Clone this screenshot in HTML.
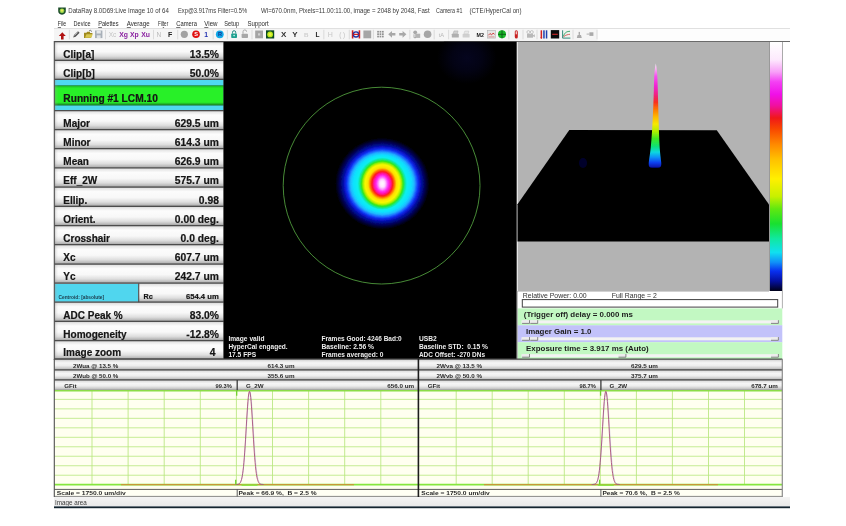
<!DOCTYPE html>
<html><head><meta charset="utf-8"><title>DataRay</title>
<style>
html,body{margin:0;padding:0;background:#fff;}
body{width:846px;height:526px;position:relative;overflow:hidden;font-family:"Liberation Sans",sans-serif;color:#111;}
.abs{position:absolute;}
.t{position:absolute;white-space:nowrap;line-height:1;}
.row{position:absolute;left:54px;width:168px;box-sizing:border-box;border-top:1px solid #555;border-left:1px solid #555;
 background:linear-gradient(to right,rgba(120,120,120,0.45) 0px,rgba(160,160,160,0.18) 1.5px,rgba(200,200,200,0) 3.5px),linear-gradient(to bottom,#cfcfcf 0%,#ececec 8%,#fdfdfd 24%,#f8f8f8 55%,#dcdcdc 80%,#b4b4b4 95%,#8c8c8c 100%);}
.row .l{position:absolute;left:8.3px;bottom:0px;font-weight:bold;font-size:10px;line-height:1;white-space:nowrap;filter:blur(0.3px);}
.row .v{position:absolute;right:3px;bottom:0px;font-weight:bold;font-size:10.3px;line-height:1;white-space:nowrap;filter:blur(0.3px);}
.srow{position:absolute;box-sizing:border-box;border-top:1px solid #555;border-left:1px solid #555;height:10.3px;
 background:linear-gradient(to bottom,#dcdcdc 0%,#f6f6f6 35%,#f0f0f0 60%,#c4c4c4 100%);}
.st{position:absolute;font-weight:bold;font-size:6.3px;line-height:1;white-space:nowrap;color:#222;filter:blur(0.25px);}
.it{position:absolute;font-weight:bold;font-size:6.4px;line-height:1;white-space:nowrap;color:#e8e8e8;filter:blur(0.25px);}
</style></head><body style="filter:blur(0.4px)">

<svg class="abs" style="left:0;top:0;filter:blur(0.25px)" width="846" height="29" viewBox="0 0 846 29" font-family="Liberation Sans, sans-serif" font-size="6.4" fill="#3a3a3a">
<path d="M58.2 7.6 H65.8 V11 Q65.8 14.2 62 14.8 Q58.2 14.2 58.2 11Z" fill="#1d4d2a"/><circle cx="62" cy="10.8" r="2.4" fill="#8fd14a"/><circle cx="62" cy="10.5" r="1.2" fill="#e9e95a"/>
<text x="68.3" y="13.3" textLength="100.5" lengthAdjust="spacingAndGlyphs">DataRay 8.0D69:Live Image 10 of 64</text>
<text x="178" y="13.3" textLength="69.1" lengthAdjust="spacingAndGlyphs">Exp@3.917ms Filter=0.5%</text>
<text x="261" y="13.3" textLength="168.6" lengthAdjust="spacingAndGlyphs">Wl=670.0nm, Pixels=11.00:11.00, image = 2048 by 2048, Fast</text>
<text x="436.1" y="13.3" textLength="26.4" lengthAdjust="spacingAndGlyphs">Camera #1</text>
<text x="469.4" y="13.3" textLength="52.1" lengthAdjust="spacingAndGlyphs">(CTE/HyperCal on)</text>
<text x="57.8" y="26.2" textLength="8.5" lengthAdjust="spacingAndGlyphs" fill="#2a2a2a"><tspan text-decoration="underline">F</tspan>ile</text>
<text x="73.6" y="26.2" textLength="16.9" lengthAdjust="spacingAndGlyphs" fill="#2a2a2a">Device</text>
<text x="98.2" y="26.2" textLength="20.4" lengthAdjust="spacingAndGlyphs" fill="#2a2a2a"><tspan text-decoration="underline">P</tspan>alettes</text>
<text x="126.8" y="26.2" textLength="22.8" lengthAdjust="spacingAndGlyphs" fill="#2a2a2a"><tspan text-decoration="underline">A</tspan>verage</text>
<text x="157.9" y="26.2" textLength="10.3" lengthAdjust="spacingAndGlyphs" fill="#2a2a2a">Fil<tspan text-decoration="underline">t</tspan>er</text>
<text x="176.2" y="26.2" textLength="20.7" lengthAdjust="spacingAndGlyphs" fill="#2a2a2a"><tspan text-decoration="underline">C</tspan>amera</text>
<text x="204.3" y="26.2" textLength="13.3" lengthAdjust="spacingAndGlyphs" fill="#2a2a2a"><tspan text-decoration="underline">V</tspan>iew</text>
<text x="224.3" y="26.2" textLength="14.8" lengthAdjust="spacingAndGlyphs" fill="#2a2a2a">Setup</text>
<text x="247.4" y="26.2" textLength="21.3" lengthAdjust="spacingAndGlyphs" fill="#2a2a2a">Support</text>
</svg>
<div class="abs" style="left:54px;top:28px;width:736px;height:13px;background:linear-gradient(to right,#f5f5f5 0,#f5f5f5 543px,#fdfdfd 544px,#fdfdfd 100%);border-top:1px solid #e0e0e0;box-sizing:border-box;"></div>
<div class="abs" style="left:54px;top:40.6px;width:736px;height:1.4px;background:#6a6a6a;"></div>
<svg class="abs" style="left:54px;top:29px;filter:blur(0.3px)" width="560" height="12" viewBox="54 29.7 560 12" font-family="Liberation Sans, sans-serif" font-weight="bold" text-anchor="middle">
<line x1="69.4" x2="69.4" y1="30.5" y2="40" stroke="#d4d4d4" stroke-width="0.8"/>
<line x1="105.5" x2="105.5" y1="30.5" y2="40" stroke="#d4d4d4" stroke-width="0.8"/>
<line x1="153.5" x2="153.5" y1="30.5" y2="40" stroke="#d4d4d4" stroke-width="0.8"/>
<line x1="177.7" x2="177.7" y1="30.5" y2="40" stroke="#d4d4d4" stroke-width="0.8"/>
<line x1="213.2" x2="213.2" y1="30.5" y2="40" stroke="#d4d4d4" stroke-width="0.8"/>
<line x1="227.4" x2="227.4" y1="30.5" y2="40" stroke="#d4d4d4" stroke-width="0.8"/>
<line x1="252" x2="252" y1="30.5" y2="40" stroke="#d4d4d4" stroke-width="0.8"/>
<line x1="323.8" x2="323.8" y1="30.5" y2="40" stroke="#d4d4d4" stroke-width="0.8"/>
<line x1="349.3" x2="349.3" y1="30.5" y2="40" stroke="#d4d4d4" stroke-width="0.8"/>
<line x1="373.4" x2="373.4" y1="30.5" y2="40" stroke="#d4d4d4" stroke-width="0.8"/>
<line x1="409.8" x2="409.8" y1="30.5" y2="40" stroke="#d4d4d4" stroke-width="0.8"/>
<line x1="434.2" x2="434.2" y1="30.5" y2="40" stroke="#d4d4d4" stroke-width="0.8"/>
<line x1="448.6" x2="448.6" y1="30.5" y2="40" stroke="#d4d4d4" stroke-width="0.8"/>
<line x1="508.8" x2="508.8" y1="30.5" y2="40" stroke="#d4d4d4" stroke-width="0.8"/>
<line x1="523" x2="523" y1="30.5" y2="40" stroke="#d4d4d4" stroke-width="0.8"/>
<line x1="537" x2="537" y1="30.5" y2="40" stroke="#d4d4d4" stroke-width="0.8"/>
<line x1="573" x2="573" y1="30.5" y2="40" stroke="#d4d4d4" stroke-width="0.8"/>
<line x1="597" x2="597" y1="30.5" y2="40" stroke="#d4d4d4" stroke-width="0.8"/>
<path d="M62.3 32.9 L65.8 36.6 H63.6 V40.1 H61 V36.6 H58.8Z" fill="#b01010"/>
<path d="M73.2 38.2 L74 35.6 L78 32 L79.6 33.4 L75.6 37.4Z" fill="#555"/><path d="M74.4 36.2 L77.6 33.2" stroke="#ddd" stroke-width="0.7"/>
<path d="M84 38.6 V33.4 H86.4 L87.2 32.4 H90 V33.6 H92.6 L91 38.6Z" fill="#a08a20"/><path d="M85 38.4 L86.4 35 H92.8 L91.2 38.4Z" fill="#d8c850"/><path d="M89 31.6 l1.6 -0.8 l1 1.6" stroke="#555" stroke-width="0.7" fill="none"/>
<rect x="95" y="31.2" width="7.4" height="7.6" fill="#a8b0b8"/><rect x="96.6" y="31.2" width="4.2" height="3" fill="#e6e8ea"/><rect x="96.8" y="36" width="3.8" height="2.8" fill="#dfe2e5"/>
<text x="112.5" y="37.6" font-size="6.6" fill="#c4c4c4" font-weight="normal">Xc</text>
<text x="123.5" y="37.6" font-size="6.8" fill="#8a20a0">Xg</text>
<text x="134.4" y="37.6" font-size="6.8" fill="#8a20a0">Xp</text>
<text x="145.6" y="37.6" font-size="6.8" fill="#8a20a0">Xu</text>
<text x="158.8" y="37.6" font-size="6.6" fill="#b8b8b8" font-weight="normal">N</text>
<text x="170.2" y="37.8" font-size="7" fill="#222">F</text>
<circle cx="184.3" cy="35" r="3.6" fill="#a2a2a2"/>
<circle cx="196" cy="35" r="3.8" fill="#e01010"/><text x="196" y="37.1" font-size="5.6" fill="#fff">S</text>
<text x="206.2" y="37.6" font-size="6.8" fill="#2030b0">1</text>
<circle cx="219.8" cy="35" r="3.9" fill="#10a8e8"/><text x="219.9" y="37.1" font-size="5.6" fill="#103090">R</text>
<path d="M232.5 34.2 V33 a1.6 1.6 0 0 1 3.2 0 V34.2" fill="none" stroke="#208880" stroke-width="1"/><rect x="231.2" y="34.2" width="5.8" height="4.6" rx="0.8" fill="#20a090"/><circle cx="234.1" cy="36.3" r="0.8" fill="#d8fff0"/>
<path d="M243 34.4 V32.4 a1.8 1.8 0 0 1 3.6 0" fill="none" stroke="#aaa" stroke-width="1"/><rect x="241.6" y="34.4" width="6.4" height="4.4" rx="0.8" fill="#a8a8a8"/>
<rect x="255.2" y="31.2" width="7.8" height="7.8" fill="#a4a4a4"/><rect x="258" y="34" width="2.2" height="2.2" fill="#d0d0d0"/>
<rect x="266" y="31" width="8.2" height="8.2" fill="#0c4a20"/><circle cx="270.1" cy="35.1" r="2.9" fill="#b8e818"/><circle cx="270.1" cy="35.1" r="1.6" fill="#e8f040"/>
<text x="283.7" y="38" font-size="8" fill="#333">X</text>
<text x="295" y="38" font-size="8" fill="#333">Y</text>
<text x="306.2" y="37.5" font-size="6.2" fill="#cfcfcf">B</text>
<text x="317.4" y="37.6" font-size="6.6" fill="#222">L</text>
<text x="330.4" y="37.8" font-size="7" fill="#c8c8c8" font-weight="normal">H</text>
<text x="342.2" y="37.4" font-size="6.4" fill="#c4c4c4" font-weight="normal">( )</text>
<rect x="351.8" y="31" width="8.4" height="8.2" fill="#f0f0f8"/><rect x="351.8" y="31" width="1.6" height="8.2" fill="#d02020"/><rect x="358.6" y="31" width="1.6" height="8.2" fill="#d02020"/><circle cx="356" cy="35.1" r="2.6" fill="none" stroke="#2030a0" stroke-width="1.3"/><rect x="353.4" y="34.5" width="5.2" height="1.2" fill="#d02020"/>
<rect x="363.4" y="31.2" width="7.8" height="7.8" fill="#a6a6a6"/>
<rect x="377.2" y="31.6" width="1.7" height="1.7" fill="#909090"/>
<rect x="377.2" y="34.0" width="1.7" height="1.7" fill="#909090"/>
<rect x="377.2" y="36.4" width="1.7" height="1.7" fill="#909090"/>
<rect x="379.6" y="31.6" width="1.7" height="1.7" fill="#909090"/>
<rect x="379.6" y="34.0" width="1.7" height="1.7" fill="#909090"/>
<rect x="379.6" y="36.4" width="1.7" height="1.7" fill="#909090"/>
<rect x="382.0" y="31.6" width="1.7" height="1.7" fill="#909090"/>
<rect x="382.0" y="34.0" width="1.7" height="1.7" fill="#909090"/>
<rect x="382.0" y="36.4" width="1.7" height="1.7" fill="#909090"/>
<path d="M388.2 35 L392 31.6 V33.8 H395.4 V36.2 H392 V38.4Z" fill="#a8a8a8"/>
<path d="M406.4 35 L402.6 31.6 V33.8 H399.2 V36.2 H402.6 V38.4Z" fill="#a8a8a8"/>
<circle cx="415.2" cy="33" r="1.9" fill="#a8a8a8"/><rect x="415.2" y="34.4" width="5" height="4.2" fill="#b4b4b4"/><path d="M414 35 v3.4 h2" stroke="#999" stroke-width="0.8" fill="none"/>
<circle cx="427.6" cy="35" r="3.8" fill="#a6a6a6"/>
<text x="441.4" y="37.4" font-size="5.8" fill="#b8b8b8" font-weight="normal">tA</text>
<rect x="451.8" y="34.4" width="7" height="3.8" rx="0.6" fill="#b0b0b0"/><path d="M453 34.4 L454 31.6 H458 L457.4 34.4Z" fill="#d0d0d0" stroke="#aaa" stroke-width="0.5"/>
<rect x="462.6" y="34.6" width="7" height="3.6" rx="0.6" fill="#d0d0d0"/><path d="M463.8 34.6 L464.8 31.8 H468.8 L468.2 34.6Z" fill="#e8e8e8" stroke="#c4c4c4" stroke-width="0.5"/>
<text x="480.2" y="37.4" font-size="6.2" fill="#111" textLength="7.4" lengthAdjust="spacingAndGlyphs">M2</text>
<rect x="487.6" y="31.2" width="7.8" height="7.6" fill="#e6e6e6" stroke="#b0b0b0" stroke-width="0.6"/><path d="M488.4 36 L490 34.2 L491.6 35.6 L493 33.8 L494.6 35" stroke="#d03030" stroke-width="0.9" fill="none"/><path d="M488.4 37.6 H494.6" stroke="#d06060" stroke-width="0.6"/>
<circle cx="502" cy="35" r="4" fill="#18b828"/><path d="M498 35 H506 M502 31 V39" stroke="#0a5a14" stroke-width="0.9"/>
<rect x="514.8" y="31" width="3" height="8.2" rx="1.5" fill="#c82020"/><rect x="515.6" y="32" width="1.4" height="3" fill="#f0c0c0"/>
<rect x="527" y="34.6" width="6" height="3.8" fill="#b8b8b8"/><circle cx="528.4" cy="32.8" r="1.5" fill="none" stroke="#b8b8b8" stroke-width="0.8"/><circle cx="531.8" cy="32.8" r="1.5" fill="none" stroke="#b8b8b8" stroke-width="0.8"/><path d="M533 36 l1.8 -1 v3 l-1.8 -1z" fill="#b8b8b8"/>
<rect x="540.6" y="31" width="1.5" height="8.2" fill="#d02020"/><rect x="543.2" y="31" width="1.5" height="8.2" fill="#2040b0"/><rect x="545.8" y="31" width="1.5" height="8.2" fill="#2040b0"/><path d="M541.3 39.6 l-1 -1.6 h2z" fill="#d02020"/>
<rect x="550.8" y="30.8" width="8.4" height="8.4" fill="#0a0a0a"/><rect x="552.2" y="34.4" width="5.6" height="1.3" fill="#b02020"/>
<rect x="562.4" y="31" width="8" height="8" fill="#eef4ee"/><path d="M562.6 31 V38.8 H570.4" stroke="#208070" stroke-width="0.9" fill="none"/><path d="M563.4 37 C565 32.6 567 32.2 570 32" stroke="#30a060" stroke-width="0.9" fill="none"/><path d="M563.4 37.6 C566 35.4 568 35.2 570 35" stroke="#d04040" stroke-width="0.8" fill="none"/>
<rect x="578.6" y="32.6" width="1.4" height="3" fill="#aaa"/><path d="M576.8 38.6 L577.6 35.6 H581 L581.8 38.6Z" fill="#aaa"/>
<rect x="589.4" y="33" width="4" height="3.6" fill="#aaa"/><path d="M586.6 34.8 H589.4" stroke="#aaa" stroke-width="0.9"/>
</svg>
<svg class="abs" style="left:50px;top:38px" width="176" height="326" viewBox="50 38 176 326" font-family="Liberation Sans, sans-serif" font-weight="bold">
<defs>
<linearGradient id="rg" x1="0" y1="0" x2="0" y2="1">
<stop offset="0" stop-color="#c8c8c8"/><stop offset="0.08" stop-color="#e6e6e6"/><stop offset="0.24" stop-color="#fcfcfc"/><stop offset="0.55" stop-color="#f8f8f8"/><stop offset="0.78" stop-color="#dedede"/><stop offset="0.93" stop-color="#b8b8b8"/><stop offset="1" stop-color="#909090"/>
</linearGradient>
<linearGradient id="lg" x1="0" y1="0" x2="1" y2="0">
<stop offset="0" stop-color="#707070" stop-opacity="0.55"/><stop offset="0.4" stop-color="#a0a0a0" stop-opacity="0.2"/><stop offset="1" stop-color="#c0c0c0" stop-opacity="0"/>
</linearGradient>
<linearGradient id="gg" x1="0" y1="0" x2="0" y2="1">
<stop offset="0" stop-color="#1a7a2a"/><stop offset="0.07" stop-color="#22d02a"/><stop offset="0.16" stop-color="#28f028"/><stop offset="0.84" stop-color="#28f028"/><stop offset="0.91" stop-color="#20b828"/><stop offset="1" stop-color="#186a22"/>
</linearGradient>
<filter id="tb"><feGaussianBlur stdDeviation="0.3"/></filter>
</defs>
<rect x="54.3" y="79.3" width="169.3" height="31.2" fill="#4fd9f0"/>
<rect x="54.3" y="85.3" width="169.3" height="20.2" fill="url(#gg)"/>
<rect x="54.3" y="41.5" width="169.3" height="18.8" fill="url(#rg)"/>
<rect x="54.3" y="60.3" width="169.3" height="19.0" fill="url(#rg)"/>
<rect x="54.3" y="110.5" width="169.3" height="19.1" fill="url(#rg)"/>
<rect x="54.3" y="129.6" width="169.3" height="19.1" fill="url(#rg)"/>
<rect x="54.3" y="148.7" width="169.3" height="19.1" fill="url(#rg)"/>
<rect x="54.3" y="167.8" width="169.3" height="19.2" fill="url(#rg)"/>
<rect x="54.3" y="187.0" width="169.3" height="19.3" fill="url(#rg)"/>
<rect x="54.3" y="206.3" width="169.3" height="19.2" fill="url(#rg)"/>
<rect x="54.3" y="225.5" width="169.3" height="19.2" fill="url(#rg)"/>
<rect x="54.3" y="244.7" width="169.3" height="19.3" fill="url(#rg)"/>
<rect x="54.3" y="264.0" width="169.3" height="19.2" fill="url(#rg)"/>
<rect x="54.3" y="283.2" width="169.3" height="19.0" fill="url(#rg)"/>
<rect x="54.3" y="302.2" width="169.3" height="19.2" fill="url(#rg)"/>
<rect x="54.3" y="321.4" width="169.3" height="19.2" fill="url(#rg)"/>
<rect x="54.3" y="340.6" width="169.3" height="18.6" fill="url(#rg)"/>
<rect x="54.3" y="283.9" width="84" height="17.8" fill="#50d6ee"/>
<line x1="138.7" x2="138.7" y1="283.2" y2="302.2" stroke="#505050" stroke-width="1.2"/>
<rect x="54.3" y="41.5" width="4" height="317.7" fill="url(#lg)"/>
<line x1="54.3" x2="223.6" y1="41.5" y2="41.5" stroke="#4c4c4c" stroke-width="1.25"/>
<line x1="54.3" x2="223.6" y1="60.3" y2="60.3" stroke="#4c4c4c" stroke-width="1.25"/>
<line x1="54.3" x2="223.6" y1="110.5" y2="110.5" stroke="#4c4c4c" stroke-width="1.25"/>
<line x1="54.3" x2="223.6" y1="129.6" y2="129.6" stroke="#4c4c4c" stroke-width="1.25"/>
<line x1="54.3" x2="223.6" y1="148.7" y2="148.7" stroke="#4c4c4c" stroke-width="1.25"/>
<line x1="54.3" x2="223.6" y1="167.8" y2="167.8" stroke="#4c4c4c" stroke-width="1.25"/>
<line x1="54.3" x2="223.6" y1="187.0" y2="187.0" stroke="#4c4c4c" stroke-width="1.25"/>
<line x1="54.3" x2="223.6" y1="206.3" y2="206.3" stroke="#4c4c4c" stroke-width="1.25"/>
<line x1="54.3" x2="223.6" y1="225.5" y2="225.5" stroke="#4c4c4c" stroke-width="1.25"/>
<line x1="54.3" x2="223.6" y1="244.7" y2="244.7" stroke="#4c4c4c" stroke-width="1.25"/>
<line x1="54.3" x2="223.6" y1="264.0" y2="264.0" stroke="#4c4c4c" stroke-width="1.25"/>
<line x1="54.3" x2="223.6" y1="283.2" y2="283.2" stroke="#4c4c4c" stroke-width="1.25"/>
<line x1="54.3" x2="223.6" y1="302.2" y2="302.2" stroke="#4c4c4c" stroke-width="1.25"/>
<line x1="54.3" x2="223.6" y1="321.4" y2="321.4" stroke="#4c4c4c" stroke-width="1.25"/>
<line x1="54.3" x2="223.6" y1="340.6" y2="340.6" stroke="#4c4c4c" stroke-width="1.25"/>
<line x1="54.3" x2="223.6" y1="79.3" y2="79.3" stroke="#4c4c4c" stroke-width="1.25"/>
<line x1="54.3" x2="223.6" y1="359.2" y2="359.2" stroke="#4c4c4c" stroke-width="1.25"/>
<line x1="54.3" x2="54.3" y1="41" y2="360" stroke="#505050" stroke-width="1.1"/>
<g filter="url(#tb)" fill="#141414" stroke="#141414" stroke-width="0.2">
<text x="63.3" y="57.5" font-size="10">Clip[a]</text>
<text x="218.9" y="57.5" font-size="10.3" text-anchor="end">13.5%</text>
<text x="63.3" y="76.5" font-size="10">Clip[b]</text>
<text x="218.9" y="76.5" font-size="10.3" text-anchor="end">50.0%</text>
<text x="63.3" y="126.8" font-size="10">Major</text>
<text x="218.9" y="126.8" font-size="10.3" text-anchor="end">629.5 um</text>
<text x="63.3" y="145.9" font-size="10">Minor</text>
<text x="218.9" y="145.9" font-size="10.3" text-anchor="end">614.3 um</text>
<text x="63.3" y="165.0" font-size="10">Mean</text>
<text x="218.9" y="165.0" font-size="10.3" text-anchor="end">626.9 um</text>
<text x="63.3" y="184.2" font-size="10">Eff_2W</text>
<text x="218.9" y="184.2" font-size="10.3" text-anchor="end">575.7 um</text>
<text x="63.3" y="203.5" font-size="10">Ellip.</text>
<text x="218.9" y="203.5" font-size="10.3" text-anchor="end">0.98</text>
<text x="63.3" y="222.7" font-size="10">Orient.</text>
<text x="218.9" y="222.7" font-size="10.3" text-anchor="end">0.00 deg.</text>
<text x="63.3" y="241.9" font-size="10">Crosshair</text>
<text x="218.9" y="241.9" font-size="10.3" text-anchor="end">0.0 deg.</text>
<text x="63.3" y="261.2" font-size="10">Xc</text>
<text x="218.9" y="261.2" font-size="10.3" text-anchor="end">607.7 um</text>
<text x="63.3" y="280.4" font-size="10">Yc</text>
<text x="218.9" y="280.4" font-size="10.3" text-anchor="end">242.7 um</text>
<text x="63.3" y="318.6" font-size="10">ADC Peak %</text>
<text x="218.9" y="318.6" font-size="10.3" text-anchor="end">83.0%</text>
<text x="63.3" y="337.8" font-size="10">Homogeneity</text>
<text x="218.9" y="337.8" font-size="10.3" text-anchor="end">-12.8%</text>
<text x="63.3" y="356.4" font-size="10">Image zoom</text>
<text x="215.6" y="356.4" font-size="10.3" text-anchor="end">4</text>
<text x="63.3" y="101.5" font-size="10.2">Running #1 LCM.10</text>
<text x="58.5" y="299.4" font-size="4.8" fill="#1c3c4c" stroke="none">Centroid: [absolute]</text>
<text x="143.5" y="298.9" font-size="7.2">Rc</text>
<text x="218.8" y="298.9" font-size="7.7" text-anchor="end">654.4 um</text>
</g>
</svg>
<div class="abs" style="left:224px;top:42px;width:292px;height:317px;background:#000;"></div>
<svg class="abs" style="left:222px;top:41px" width="295" height="319" viewBox="222 41 295 319">
<defs><filter id="b1" x="-20%" y="-20%" width="140%" height="140%"><feGaussianBlur stdDeviation="0.7"/></filter></defs>
<rect x="223.4" y="41.7" width="293.3" height="317.6" fill="#000"/>
<radialGradient id="gl" cx="0.5" cy="0.5" r="0.5"><stop offset="0" stop-color="#05051e"/><stop offset="0.5" stop-color="#030314"/><stop offset="1" stop-color="#000"/></radialGradient><clipPath id="cpc"><rect x="223.4" y="41.7" width="293.3" height="317.6"/></clipPath><ellipse cx="467" cy="58" rx="30" ry="26" fill="url(#gl)" clip-path="url(#cpc)"/>
<g filter="url(#b1)">
<ellipse cx="382.3" cy="183.7" rx="47.50" ry="46.07" fill="#000000"/>
<ellipse cx="382.3" cy="183.7" rx="46.75" ry="45.35" fill="#00010f"/>
<ellipse cx="382.3" cy="183.7" rx="46.00" ry="44.62" fill="#01021d"/>
<ellipse cx="382.3" cy="183.7" rx="45.25" ry="43.89" fill="#01032c"/>
<ellipse cx="382.3" cy="183.7" rx="44.50" ry="43.16" fill="#02043a"/>
<ellipse cx="382.3" cy="183.7" rx="43.75" ry="42.44" fill="#020549"/>
<ellipse cx="382.3" cy="183.7" rx="43.00" ry="41.71" fill="#030659"/>
<ellipse cx="382.3" cy="183.7" rx="42.25" ry="40.98" fill="#030768"/>
<ellipse cx="382.3" cy="183.7" rx="41.50" ry="40.25" fill="#040878"/>
<ellipse cx="382.3" cy="183.7" rx="40.75" ry="39.53" fill="#050a8a"/>
<ellipse cx="382.3" cy="183.7" rx="40.00" ry="38.80" fill="#060c9c"/>
<ellipse cx="382.3" cy="183.7" rx="39.25" ry="38.07" fill="#070fad"/>
<ellipse cx="382.3" cy="183.7" rx="38.50" ry="37.34" fill="#0914bf"/>
<ellipse cx="382.3" cy="183.7" rx="37.75" ry="36.62" fill="#0b1dd0"/>
<ellipse cx="382.3" cy="183.7" rx="37.00" ry="35.89" fill="#0e27e0"/>
<ellipse cx="382.3" cy="183.7" rx="36.25" ry="35.16" fill="#1032f0"/>
<ellipse cx="382.3" cy="183.7" rx="35.50" ry="34.44" fill="#164af6"/>
<ellipse cx="382.3" cy="183.7" rx="34.75" ry="33.71" fill="#1c62fc"/>
<ellipse cx="382.3" cy="183.7" rx="34.00" ry="32.98" fill="#207bff"/>
<ellipse cx="382.3" cy="183.7" rx="33.25" ry="32.25" fill="#2096ff"/>
<ellipse cx="382.3" cy="183.7" rx="32.50" ry="31.52" fill="#20b1ff"/>
<ellipse cx="382.3" cy="183.7" rx="31.75" ry="30.80" fill="#1dc0ff"/>
<ellipse cx="382.3" cy="183.7" rx="31.00" ry="30.07" fill="#19cbff"/>
<ellipse cx="382.3" cy="183.7" rx="30.25" ry="29.34" fill="#14d5ff"/>
<ellipse cx="382.3" cy="183.7" rx="29.50" ry="28.84" fill="#10e0ff"/>
<ellipse cx="382.3" cy="183.7" rx="28.75" ry="28.43" fill="#10e3fc"/>
<ellipse cx="382.3" cy="183.7" rx="28.00" ry="28.00" fill="#10e6fa"/>
<ellipse cx="382.3" cy="183.7" rx="27.25" ry="27.56" fill="#10e8f7"/>
<ellipse cx="382.3" cy="183.7" rx="26.50" ry="27.10" fill="#10ebf5"/>
<ellipse cx="382.3" cy="183.7" rx="25.75" ry="26.62" fill="#10eef2"/>
<ellipse cx="382.3" cy="183.7" rx="25.00" ry="26.12" fill="#10efe8"/>
<ellipse cx="382.3" cy="183.7" rx="24.25" ry="25.61" fill="#10ecca"/>
<ellipse cx="382.3" cy="183.7" rx="23.50" ry="25.09" fill="#10e9ac"/>
<ellipse cx="382.3" cy="183.7" rx="22.75" ry="24.48" fill="#18e882"/>
<ellipse cx="382.3" cy="183.7" rx="22.00" ry="23.74" fill="#24e84f"/>
<ellipse cx="382.3" cy="183.7" rx="21.25" ry="23.00" fill="#33e81f"/>
<ellipse cx="382.3" cy="183.7" rx="20.50" ry="22.25" fill="#66eb13"/>
<ellipse cx="382.3" cy="183.7" rx="19.75" ry="21.50" fill="#99ee07"/>
<ellipse cx="382.3" cy="183.7" rx="19.00" ry="20.76" fill="#c3f100"/>
<ellipse cx="382.3" cy="183.7" rx="18.25" ry="20.03" fill="#ddf500"/>
<ellipse cx="382.3" cy="183.7" rx="17.50" ry="19.30" fill="#f8f800"/>
<ellipse cx="382.3" cy="183.7" rx="16.75" ry="18.56" fill="#faf200"/>
<ellipse cx="382.3" cy="183.7" rx="16.00" ry="17.81" fill="#fcec00"/>
<ellipse cx="382.3" cy="183.7" rx="15.25" ry="17.05" fill="#fde500"/>
<ellipse cx="382.3" cy="183.7" rx="14.50" ry="16.29" fill="#ffdb00"/>
<ellipse cx="382.3" cy="183.7" rx="13.75" ry="15.51" fill="#ffb300"/>
<ellipse cx="382.3" cy="183.7" rx="13.00" ry="14.73" fill="#ff8b00"/>
<ellipse cx="382.3" cy="183.7" rx="12.25" ry="13.94" fill="#ff6408"/>
<ellipse cx="382.3" cy="183.7" rx="11.50" ry="13.21" fill="#ff3f12"/>
<ellipse cx="382.3" cy="183.7" rx="10.75" ry="12.49" fill="#ff1c20"/>
<ellipse cx="382.3" cy="183.7" rx="10.00" ry="11.75" fill="#ff1755"/>
<ellipse cx="382.3" cy="183.7" rx="9.25" ry="10.99" fill="#ff138a"/>
<ellipse cx="382.3" cy="183.7" rx="8.50" ry="10.21" fill="#ff14b4"/>
<ellipse cx="382.3" cy="183.7" rx="7.75" ry="9.48" fill="#ff1dcc"/>
<ellipse cx="382.3" cy="183.7" rx="7.00" ry="8.84" fill="#ff26e5"/>
<ellipse cx="382.3" cy="183.7" rx="6.25" ry="8.14" fill="#ff39f6"/>
<ellipse cx="382.3" cy="183.7" rx="5.50" ry="7.38" fill="#ff5ffa"/>
<ellipse cx="382.3" cy="183.7" rx="4.75" ry="6.56" fill="#ff84fe"/>
<ellipse cx="382.3" cy="183.7" rx="4.00" ry="5.68" fill="#ffa9ff"/>
<ellipse cx="382.3" cy="183.7" rx="3.25" ry="4.62" fill="#ffceff"/>
<ellipse cx="382.3" cy="183.7" rx="2.50" ry="3.55" fill="#ffe7ff"/>
<ellipse cx="382.3" cy="183.7" rx="1.75" ry="2.48" fill="#ffeeff"/>
<ellipse cx="382.3" cy="183.7" rx="1.00" ry="1.42" fill="#fff5ff"/>
</g>
<circle cx="381.6" cy="185.6" r="98.4" fill="none" stroke="#4f9a3c" stroke-width="0.9"/>
</svg>
<svg class="abs" style="left:222px;top:330px;filter:blur(0.25px)" width="295" height="30" viewBox="222 330 295 30" font-family="Liberation Sans, sans-serif" font-weight="bold" font-size="6.5" fill="#ececec">
<text x="228.4" y="341.3" textLength="36.1" lengthAdjust="spacingAndGlyphs">Image valid</text>
<text x="228.4" y="349.0" textLength="59.3" lengthAdjust="spacingAndGlyphs">HyperCal engaged.</text>
<text x="228.4" y="356.7" textLength="27.7" lengthAdjust="spacingAndGlyphs">17.5 FPS</text>
<text x="321.5" y="341.3" textLength="80.2" lengthAdjust="spacingAndGlyphs">Frames Good: 4246 Bad:0</text>
<text x="321.5" y="349.0" textLength="52.5" lengthAdjust="spacingAndGlyphs">Baseline: 2.56 %</text>
<text x="321.5" y="356.7" textLength="62.0" lengthAdjust="spacingAndGlyphs">Frames averaged: 0</text>
<text x="418.9" y="341.3" textLength="17.8" lengthAdjust="spacingAndGlyphs">USB2</text>
<text x="418.9" y="349.0" textLength="69.1" lengthAdjust="spacingAndGlyphs">Baseline STD:&#160; 0.15 %</text>
<text x="418.9" y="356.7" textLength="66.1" lengthAdjust="spacingAndGlyphs">ADC Offset: -270 DNs</text>
</svg>
<div class="abs" style="left:517px;top:42px;width:252px;height:250px;background:#b3b3b3;border-left:1px solid #e4e4e4;box-sizing:border-box;"></div>
<svg class="abs" style="left:517px;top:42px" width="252" height="250" viewBox="517 42 252 250">
<defs>
<linearGradient id="spk" x1="0" y1="0" x2="0" y2="1">
<stop offset="0" stop-color="#fbe8fb"/>
<stop offset="0.05" stop-color="#f8b0f0"/>
<stop offset="0.12" stop-color="#f850f0"/>
<stop offset="0.22" stop-color="#f020d0"/>
<stop offset="0.30" stop-color="#f02080"/>
<stop offset="0.37" stop-color="#f83020"/>
<stop offset="0.44" stop-color="#ff7800"/>
<stop offset="0.51" stop-color="#ffb800"/>
<stop offset="0.58" stop-color="#f8e800"/>
<stop offset="0.65" stop-color="#b0f000"/>
<stop offset="0.72" stop-color="#40e820"/>
<stop offset="0.79" stop-color="#10e070"/>
<stop offset="0.85" stop-color="#10d8e0"/>
<stop offset="0.90" stop-color="#1090f8"/>
<stop offset="0.95" stop-color="#1040f0"/>
<stop offset="1" stop-color="#0810a0"/>
</linearGradient>
<filter id="b2"><feGaussianBlur stdDeviation="0.45"/></filter>
</defs>
<polygon points="569.3,130 716.8,130.3 769,204.6 769,241.5 517.5,241.5 517.5,204.2" fill="#000"/>
<ellipse cx="583" cy="163" rx="4" ry="5" fill="#05052c" filter="url(#b2)"/>
<path d="M655.8 63.6 C656.9 68 657.3 74 657.5 80 C657.9 92 658.1 102 658.4 113 C658.8 126 659.1 138 659.7 148 C660.1 154 660.9 159 661.3 163 C661.6 166.4 660.4 167.8 658 167.8 H652 C649.6 167.8 648.4 166.4 648.7 163 C649.1 159 650.1 154 650.7 148 C651.7 138 652.4 126 653 113 C653.5 102 653.8 92 654.1 80 C654.3 74 654.7 68 655.8 63.6Z" fill="url(#spk)" filter="url(#b2)"/>
</svg>
<div class="abs" style="left:769px;top:42px;width:13.5px;height:249px;background:linear-gradient(to bottom,#ffffff 0%,#fdeafd 7%,#f8a0f8 12%,#f440f4 16%,#f010e8 21%,#f010a0 25.5%,#f01818 30.5%,#f84800 35%,#ff8800 41%,#ffc000 47%,#fff000 55%,#c8f000 62%,#60e810 67%,#18e030 73%,#10e8a0 79%,#10e0f0 84.5%,#1090f8 88.5%,#0830f0 92%,#0410a0 96%,#000018 100%);border-left:1px solid #999;border-right:1px solid #aaa;box-sizing:border-box;"></div>
<svg class="abs" style="left:514px;top:288px" width="272" height="74" viewBox="514 288 272 74" font-family="Liberation Sans, sans-serif">
<rect x="517.5" y="291.6" width="264.8" height="16.9" fill="#fff"/>
<rect x="522.3" y="299.6" width="255.4" height="7.5" fill="#fff" stroke="#404040" stroke-width="1"/>
<rect x="517.5" y="308.4" width="264.8" height="17.1" fill="#c2f8c2"/>
<rect x="521.5" y="320.4" width="257.5" height="3" fill="#f3f3f3" filter="url(#tb3)"/>
<rect x="522.1" y="320.2" width="7.4" height="3.2" fill="#ececec"/>
<path d="M522.1 323.4 H529.5 V320.2" fill="none" stroke="#6a6a6a" stroke-width="0.8"/>
<rect x="530.3" y="320.2" width="7.4" height="3.2" fill="#ececec"/>
<path d="M530.3 323.4 H537.6999999999999 V320.2" fill="none" stroke="#6a6a6a" stroke-width="0.8"/>
<rect x="771" y="320.2" width="7.4" height="3.2" fill="#ececec"/>
<path d="M771 323.4 H778.4 V320.2" fill="none" stroke="#6a6a6a" stroke-width="0.8"/>
<rect x="517.5" y="325.3" width="264.8" height="17.1" fill="#c2c2fa"/>
<rect x="521.5" y="337.3" width="257.5" height="3" fill="#f3f3f3" filter="url(#tb3)"/>
<rect x="522.1" y="337.1" width="7.4" height="3.2" fill="#ececec"/>
<path d="M522.1 340.3 H529.5 V337.1" fill="none" stroke="#6a6a6a" stroke-width="0.8"/>
<rect x="530.3" y="337.1" width="7.4" height="3.2" fill="#ececec"/>
<path d="M530.3 340.3 H537.6999999999999 V337.1" fill="none" stroke="#6a6a6a" stroke-width="0.8"/>
<rect x="771" y="337.1" width="7.4" height="3.2" fill="#ececec"/>
<path d="M771 340.3 H778.4 V337.1" fill="none" stroke="#6a6a6a" stroke-width="0.8"/>
<rect x="517.5" y="342.2" width="264.8" height="17.1" fill="#c2f8c2"/>
<rect x="521.5" y="354.2" width="257.5" height="3" fill="#f3f3f3" filter="url(#tb3)"/>
<rect x="522.1" y="354.0" width="7.4" height="3.2" fill="#ececec"/>
<path d="M522.1 357.2 H529.5 V354.0" fill="none" stroke="#6a6a6a" stroke-width="0.8"/>
<rect x="618.5" y="354.0" width="7.4" height="3.2" fill="#ececec"/>
<path d="M618.5 357.2 H625.9 V354.0" fill="none" stroke="#6a6a6a" stroke-width="0.8"/>
<rect x="771" y="354.0" width="7.4" height="3.2" fill="#ececec"/>
<path d="M771 357.2 H778.4 V354.0" fill="none" stroke="#6a6a6a" stroke-width="0.8"/>
<defs><filter id="tb3"><feGaussianBlur stdDeviation="0.3"/></filter></defs>
<g filter="url(#tb3)">
<text x="523.8" y="317.0" font-size="7.9" font-weight="bold" fill="#1c1c1c" textLength="109.2" lengthAdjust="spacingAndGlyphs">(Trigger off) delay = 0.000 ms</text>
<text x="526" y="333.9" font-size="7.9" font-weight="bold" fill="#1c1c1c" textLength="65.5" lengthAdjust="spacingAndGlyphs">Imager Gain = 1.0</text>
<text x="526" y="350.8" font-size="7.9" font-weight="bold" fill="#1c1c1c" textLength="122.7" lengthAdjust="spacingAndGlyphs">Exposure time = 3.917 ms (Auto)</text>
<text x="522.8" y="298.3" font-size="7" fill="#303030" textLength="63.8" lengthAdjust="spacingAndGlyphs">Relative Power: 0.00</text>
<text x="611.7" y="298.3" font-size="7" fill="#303030" textLength="45.1" lengthAdjust="spacingAndGlyphs">Full Range = 2</text>
</g>
<line x1="517.3" x2="517.3" y1="291" y2="359.5" stroke="#9a9a9a" stroke-width="0.8"/>
<line x1="782.4" x2="782.4" y1="291" y2="308.4" stroke="#9a9a9a" stroke-width="0.8"/>
</svg>
<svg class="abs" style="left:50px;top:355px" width="744" height="146" viewBox="50 355 744 146" font-family="Liberation Sans, sans-serif" font-weight="bold">
<defs>
<linearGradient id="sg" x1="0" y1="0" x2="0" y2="1">
<stop offset="0" stop-color="#b8b8b8"/><stop offset="0.14" stop-color="#e2e2e2"/><stop offset="0.35" stop-color="#f6f6f6"/><stop offset="0.6" stop-color="#eeeeee"/><stop offset="0.85" stop-color="#cacaca"/><stop offset="1" stop-color="#9a9a9a"/>
</linearGradient>
<filter id="tb2"><feGaussianBlur stdDeviation="0.28"/></filter>
</defs>
<rect x="54.3" y="359.2" width="728.0" height="10.7" fill="url(#sg)"/>
<rect x="54.3" y="369.9" width="728.0" height="10.0" fill="url(#sg)"/>
<rect x="54.3" y="379.9" width="728.0" height="10.1" fill="url(#sg)"/>
<rect x="54.3" y="390" width="728.0" height="107" fill="#fffff0"/>
<line x1="54.3" x2="418.4" y1="399.38" y2="399.38" stroke="#bce884" stroke-width="0.85"/>
<line x1="54.3" x2="418.4" y1="408.86" y2="408.86" stroke="#bce884" stroke-width="0.85"/>
<line x1="54.3" x2="418.4" y1="418.34" y2="418.34" stroke="#bce884" stroke-width="0.85"/>
<line x1="54.3" x2="418.4" y1="427.82" y2="427.82" stroke="#bce884" stroke-width="0.85"/>
<line x1="54.3" x2="418.4" y1="437.30" y2="437.30" stroke="#bce884" stroke-width="0.85"/>
<line x1="54.3" x2="418.4" y1="446.78" y2="446.78" stroke="#bce884" stroke-width="0.85"/>
<line x1="54.3" x2="418.4" y1="456.26" y2="456.26" stroke="#bce884" stroke-width="0.85"/>
<line x1="54.3" x2="418.4" y1="465.74" y2="465.74" stroke="#bce884" stroke-width="0.85"/>
<line x1="54.3" x2="418.4" y1="475.22" y2="475.22" stroke="#bce884" stroke-width="0.85"/>
<line x1="92.0" x2="92.0" y1="390.7" y2="484.7" stroke="#b8e67e" stroke-width="0.85"/>
<line x1="128.1" x2="128.1" y1="390.7" y2="484.7" stroke="#b8e67e" stroke-width="0.85"/>
<line x1="164.2" x2="164.2" y1="390.7" y2="484.7" stroke="#b8e67e" stroke-width="0.85"/>
<line x1="200.3" x2="200.3" y1="390.7" y2="484.7" stroke="#b8e67e" stroke-width="0.85"/>
<line x1="236.4" x2="236.4" y1="390.7" y2="484.7" stroke="#b8e67e" stroke-width="0.85"/>
<line x1="272.5" x2="272.5" y1="390.7" y2="484.7" stroke="#b8e67e" stroke-width="0.85"/>
<line x1="308.6" x2="308.6" y1="390.7" y2="484.7" stroke="#b8e67e" stroke-width="0.85"/>
<line x1="344.7" x2="344.7" y1="390.7" y2="484.7" stroke="#b8e67e" stroke-width="0.85"/>
<line x1="380.8" x2="380.8" y1="390.7" y2="484.7" stroke="#b8e67e" stroke-width="0.85"/>
<line x1="54.3" x2="418.4" y1="390.7" y2="390.7" stroke="#8cdc48" stroke-width="1.5"/>
<line x1="54.3" x2="418.4" y1="484.7" y2="484.7" stroke="#86e63e" stroke-width="1.7"/>
<line x1="121" x2="354" y1="484.7" y2="484.7" stroke="#c89838" stroke-width="1.3"/>
<line x1="241.5" x2="257.5" y1="485.09999999999997" y2="485.09999999999997" stroke="#86e63e" stroke-width="1.5"/>
<polyline points="235.5,484.5 235.9,484.5 236.3,484.5 236.7,484.4 237.1,484.4 237.5,484.4 237.9,484.3 238.3,484.2 238.7,484.1 239.1,483.9 239.5,483.6 239.9,483.1 240.3,482.6 240.7,481.8 241.1,480.8 241.5,479.6 241.9,477.9 242.3,475.9 242.7,473.3 243.1,470.3 243.5,466.7 243.9,462.4 244.3,457.6 244.7,452.1 245.1,446.2 245.5,439.8 245.9,433.1 246.3,426.3 246.7,419.5 247.1,413.0 247.5,406.9 247.9,401.6 248.3,397.3 248.7,394.0 249.1,392.0 249.5,391.3 249.9,392.0 250.3,394.0 250.7,397.3 251.1,401.6 251.5,406.9 251.9,413.0 252.3,419.5 252.7,426.3 253.1,433.1 253.5,439.8 253.9,446.2 254.3,452.1 254.7,457.6 255.1,462.4 255.5,466.7 255.9,470.3 256.3,473.3 256.7,475.9 257.1,477.9 257.5,479.6 257.9,480.8 258.3,481.8 258.7,482.6 259.1,483.1 259.5,483.6 259.9,483.9 260.3,484.1 260.7,484.2 261.1,484.3 261.5,484.4 261.9,484.4 262.3,484.4 262.7,484.5 263.1,484.5 263.5,484.5" fill="none" stroke="#b4506e" stroke-width="1.0" opacity="0.9"/>
<polyline points="235.5,484.5 235.9,484.5 236.3,484.5 236.7,484.4 237.1,484.4 237.5,484.3 237.9,484.3 238.3,484.2 238.7,484.0 239.1,483.8 239.5,483.5 239.9,483.1 240.3,482.5 240.7,481.7 241.1,480.8 241.5,479.5 241.9,478.0 242.3,476.0 242.7,473.6 243.1,470.7 243.5,467.3 243.9,463.4 244.3,458.9 244.7,453.8 245.1,448.2 245.5,442.3 245.9,435.9 246.3,429.4 246.7,422.9 247.1,416.5 247.5,410.5 247.9,405.1 248.3,400.3 248.7,396.5 249.1,393.8 249.5,392.3 249.9,391.9 250.3,392.9 250.7,395.0 251.1,398.3 251.5,402.6 251.9,407.7 252.3,413.5 252.7,419.7 253.1,426.2 253.5,432.7 253.9,439.1 254.3,445.3 254.7,451.1 255.1,456.4 255.5,461.2 255.9,465.4 256.3,469.1 256.7,472.2 257.1,474.9 257.5,477.0 257.9,478.8 258.3,480.2 258.7,481.3 259.1,482.1 259.5,482.8 259.9,483.3 260.3,483.6 260.7,483.9 261.1,484.1 261.5,484.2 261.9,484.3 262.3,484.4 262.7,484.4 263.1,484.4 263.5,484.5" fill="none" stroke="#7a60c0" stroke-width="0.5" opacity="0.6"/>
<line x1="236.7" x2="236.7" y1="390.7" y2="395.7" stroke="#70d030" stroke-width="1.3"/>
<line x1="235.7" x2="235.7" y1="479.7" y2="484.7" stroke="#70d030" stroke-width="1.3"/>
<line x1="418.4" x2="782.3" y1="399.38" y2="399.38" stroke="#bce884" stroke-width="0.85"/>
<line x1="418.4" x2="782.3" y1="408.86" y2="408.86" stroke="#bce884" stroke-width="0.85"/>
<line x1="418.4" x2="782.3" y1="418.34" y2="418.34" stroke="#bce884" stroke-width="0.85"/>
<line x1="418.4" x2="782.3" y1="427.82" y2="427.82" stroke="#bce884" stroke-width="0.85"/>
<line x1="418.4" x2="782.3" y1="437.30" y2="437.30" stroke="#bce884" stroke-width="0.85"/>
<line x1="418.4" x2="782.3" y1="446.78" y2="446.78" stroke="#bce884" stroke-width="0.85"/>
<line x1="418.4" x2="782.3" y1="456.26" y2="456.26" stroke="#bce884" stroke-width="0.85"/>
<line x1="418.4" x2="782.3" y1="465.74" y2="465.74" stroke="#bce884" stroke-width="0.85"/>
<line x1="418.4" x2="782.3" y1="475.22" y2="475.22" stroke="#bce884" stroke-width="0.85"/>
<line x1="456.2" x2="456.2" y1="390.7" y2="484.7" stroke="#b8e67e" stroke-width="0.85"/>
<line x1="492.2" x2="492.2" y1="390.7" y2="484.7" stroke="#b8e67e" stroke-width="0.85"/>
<line x1="528.2" x2="528.2" y1="390.7" y2="484.7" stroke="#b8e67e" stroke-width="0.85"/>
<line x1="564.3" x2="564.3" y1="390.7" y2="484.7" stroke="#b8e67e" stroke-width="0.85"/>
<line x1="600.3" x2="600.3" y1="390.7" y2="484.7" stroke="#b8e67e" stroke-width="0.85"/>
<line x1="636.4" x2="636.4" y1="390.7" y2="484.7" stroke="#b8e67e" stroke-width="0.85"/>
<line x1="672.4" x2="672.4" y1="390.7" y2="484.7" stroke="#b8e67e" stroke-width="0.85"/>
<line x1="708.5" x2="708.5" y1="390.7" y2="484.7" stroke="#b8e67e" stroke-width="0.85"/>
<line x1="744.5" x2="744.5" y1="390.7" y2="484.7" stroke="#b8e67e" stroke-width="0.85"/>
<line x1="418.4" x2="782.3" y1="390.7" y2="390.7" stroke="#8cdc48" stroke-width="1.5"/>
<line x1="418.4" x2="782.3" y1="484.7" y2="484.7" stroke="#86e63e" stroke-width="1.7"/>
<line x1="484" x2="718" y1="484.7" y2="484.7" stroke="#c89838" stroke-width="1.3"/>
<line x1="597.8" x2="613.8" y1="485.09999999999997" y2="485.09999999999997" stroke="#86e63e" stroke-width="1.5"/>
<polyline points="591.8,484.5 592.2,484.5 592.6,484.5 593.0,484.4 593.4,484.4 593.8,484.4 594.2,484.3 594.6,484.2 595.0,484.1 595.4,483.9 595.8,483.6 596.2,483.1 596.6,482.6 597.0,481.8 597.4,480.8 597.8,479.6 598.2,477.9 598.6,475.9 599.0,473.3 599.4,470.3 599.8,466.7 600.2,462.4 600.6,457.6 601.0,452.1 601.4,446.2 601.8,439.8 602.2,433.1 602.6,426.3 603.0,419.5 603.4,413.0 603.8,406.9 604.2,401.6 604.6,397.3 605.0,394.0 605.4,392.0 605.8,391.3 606.2,392.0 606.6,394.0 607.0,397.3 607.4,401.6 607.8,406.9 608.2,413.0 608.6,419.5 609.0,426.3 609.4,433.1 609.8,439.8 610.2,446.2 610.6,452.1 611.0,457.6 611.4,462.4 611.8,466.7 612.2,470.3 612.6,473.3 613.0,475.9 613.4,477.9 613.8,479.6 614.2,480.8 614.6,481.8 615.0,482.6 615.4,483.1 615.8,483.6 616.2,483.9 616.6,484.1 617.0,484.2 617.4,484.3 617.8,484.4 618.2,484.4 618.6,484.4 619.0,484.5 619.4,484.5 619.8,484.5" fill="none" stroke="#b4506e" stroke-width="1.0" opacity="0.9"/>
<polyline points="591.8,484.5 592.2,484.5 592.6,484.5 593.0,484.4 593.4,484.4 593.8,484.3 594.2,484.3 594.6,484.2 595.0,484.0 595.4,483.8 595.8,483.5 596.2,483.1 596.6,482.5 597.0,481.7 597.4,480.8 597.8,479.5 598.2,478.0 598.6,476.0 599.0,473.6 599.4,470.7 599.8,467.3 600.2,463.4 600.6,458.9 601.0,453.8 601.4,448.2 601.8,442.3 602.2,435.9 602.6,429.4 603.0,422.9 603.4,416.5 603.8,410.5 604.2,405.1 604.6,400.3 605.0,396.5 605.4,393.8 605.8,392.3 606.2,391.9 606.6,392.9 607.0,395.0 607.4,398.3 607.8,402.6 608.2,407.7 608.6,413.5 609.0,419.7 609.4,426.2 609.8,432.7 610.2,439.1 610.6,445.3 611.0,451.1 611.4,456.4 611.8,461.2 612.2,465.4 612.6,469.1 613.0,472.2 613.4,474.9 613.8,477.0 614.2,478.8 614.6,480.2 615.0,481.3 615.4,482.1 615.8,482.8 616.2,483.3 616.6,483.6 617.0,483.9 617.4,484.1 617.8,484.2 618.2,484.3 618.6,484.4 619.0,484.4 619.4,484.4 619.8,484.5" fill="none" stroke="#7a60c0" stroke-width="0.5" opacity="0.6"/>
<line x1="600.6" x2="600.6" y1="390.7" y2="395.7" stroke="#70d030" stroke-width="1.3"/>
<line x1="599.6" x2="599.6" y1="479.7" y2="484.7" stroke="#70d030" stroke-width="1.3"/>
<rect x="54.3" y="489" width="728.0" height="7.4" fill="#fffff4"/>
<line x1="54.3" x2="782.3" y1="489.4" y2="489.4" stroke="#4a4a4a" stroke-width="0.9"/>
<line x1="54.3" x2="782.3" y1="496.4" y2="496.4" stroke="#7a7a7a" stroke-width="0.9"/>
<line x1="237.2" x2="237.2" y1="489" y2="496.5" stroke="#5a5a5a" stroke-width="1"/>
<line x1="600.9" x2="600.9" y1="489" y2="496.5" stroke="#5a5a5a" stroke-width="1"/>
<line x1="54.3" x2="782.3" y1="359.2" y2="359.2" stroke="#4a4a4a" stroke-width="1.3"/>
<line x1="54.3" x2="782.3" y1="369.9" y2="369.9" stroke="#4a4a4a" stroke-width="1.3"/>
<line x1="54.3" x2="782.3" y1="379.9" y2="379.9" stroke="#4a4a4a" stroke-width="1.3"/>
<line x1="237.2" x2="237.2" y1="380" y2="390.2" stroke="#3a3a3a" stroke-width="1.3"/>
<line x1="600.9" x2="600.9" y1="380" y2="390.2" stroke="#3a3a3a" stroke-width="1.3"/>
<line x1="418.4" x2="418.4" y1="359" y2="497" stroke="#1c1c1c" stroke-width="1.6"/>
<line x1="54.3" x2="54.3" y1="359" y2="497" stroke="#505050" stroke-width="1.1"/>
<line x1="782.3" x2="782.3" y1="359" y2="497" stroke="#8c8c8c" stroke-width="1.2"/>
<g filter="url(#tb2)" fill="#2a2a2a" font-size="6.05">
<text x="73" y="367.8" textLength="45.3" lengthAdjust="spacingAndGlyphs">2Wua @ 13.5 %</text>
<text x="73" y="377.7" textLength="45.3" lengthAdjust="spacingAndGlyphs">2Wub @ 50.0 %</text>
<text x="267.5" y="367.8" textLength="27.0" lengthAdjust="spacingAndGlyphs">614.3 um</text>
<text x="267.5" y="377.7" textLength="27.0" lengthAdjust="spacingAndGlyphs">355.6 um</text>
<text x="436.6" y="367.8" textLength="45.4" lengthAdjust="spacingAndGlyphs">2Wva @ 13.5 %</text>
<text x="436.6" y="377.7" textLength="45.4" lengthAdjust="spacingAndGlyphs">2Wvb @ 50.0 %</text>
<text x="630.9" y="367.8" textLength="27.0" lengthAdjust="spacingAndGlyphs">629.5 um</text>
<text x="630.9" y="377.7" textLength="27.0" lengthAdjust="spacingAndGlyphs">375.7 um</text>
<text x="64.2" y="387.7" textLength="12.4" lengthAdjust="spacingAndGlyphs">GFit</text>
<text x="427.7" y="387.7" textLength="12.4" lengthAdjust="spacingAndGlyphs">GFit</text>
<text x="246" y="387.7" textLength="17.6" lengthAdjust="spacingAndGlyphs">G_2W</text>
<text x="609.6" y="387.7" textLength="17.6" lengthAdjust="spacingAndGlyphs">G_2W</text>
<text x="215.5" y="387.7" textLength="16.3" lengthAdjust="spacingAndGlyphs">99.3%</text>
<text x="387.2" y="387.7" textLength="27.0" lengthAdjust="spacingAndGlyphs">656.0 um</text>
<text x="579.6" y="387.7" textLength="16.3" lengthAdjust="spacingAndGlyphs">98.7%</text>
<text x="751.2" y="387.7" textLength="26.7" lengthAdjust="spacingAndGlyphs">678.7 um</text>
<text x="56.7" y="495.2" textLength="69.1" lengthAdjust="spacingAndGlyphs">Scale = 1750.0 um/div</text>
<text x="238.4" y="495.2" textLength="78.2" lengthAdjust="spacingAndGlyphs">Peak = 66.9 %,&#160; B = 2.5 %</text>
<text x="421.3" y="495.2" textLength="68.5" lengthAdjust="spacingAndGlyphs">Scale = 1750.0 um/div</text>
<text x="602.4" y="495.2" textLength="77.5" lengthAdjust="spacingAndGlyphs">Peak = 70.6 %,&#160; B = 2.5 %</text>
</g>
</svg>
<div class="abs" style="left:54px;top:497px;width:736px;height:10px;background:linear-gradient(to bottom,#f4f4f4,#e8e8e8);"></div>
<svg class="abs" style="left:50px;top:496px;filter:blur(0.25px)" width="100" height="12" viewBox="50 496 100 12" font-family="Liberation Sans, sans-serif" font-size="6.4" fill="#3a3a3a"><text x="55" y="504.6" textLength="31.8" lengthAdjust="spacingAndGlyphs">Image area</text></svg>
<div class="abs" style="left:54px;top:506px;width:736px;height:1px;background:#6a7680;"></div>
<div class="abs" style="left:54px;top:507px;width:736px;height:1px;background:#14242e;"></div>
<div class="abs" style="left:54px;top:508px;width:736px;height:1px;background:#9aa4aa;opacity:0.5"></div>
</body></html>
